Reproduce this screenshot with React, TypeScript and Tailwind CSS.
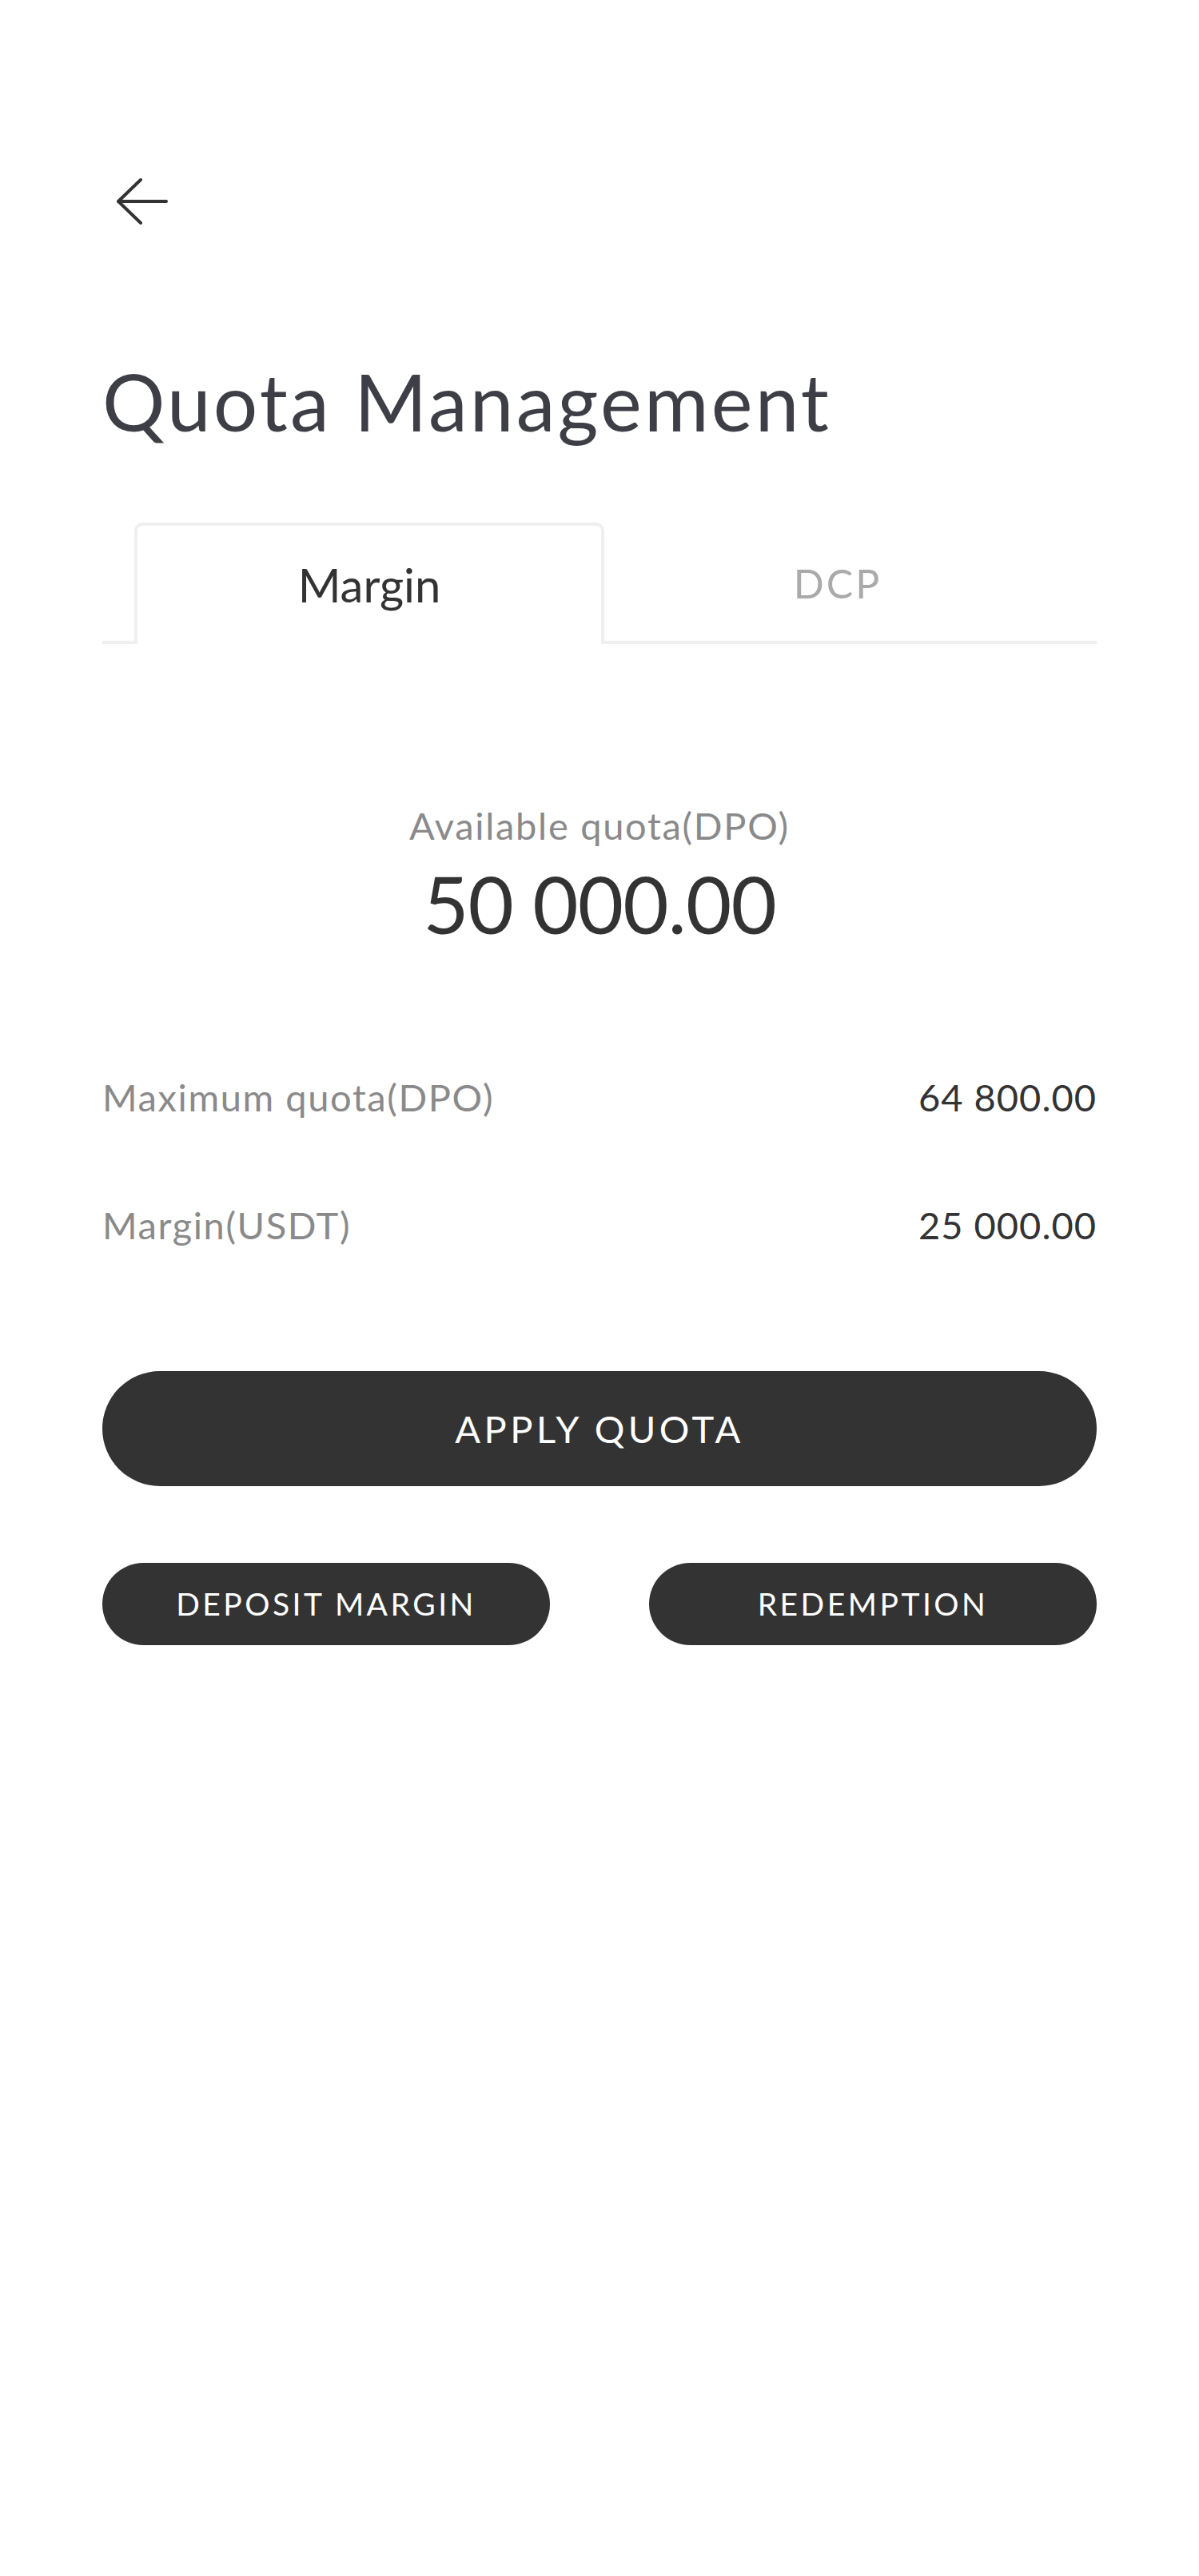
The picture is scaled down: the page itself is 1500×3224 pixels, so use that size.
import React from "react"

export default function App() {
  const rows = [
    { label: "Maximum quota(DPO)", value: "64 800.00" },
    { label: "Margin(USDT)", value: "25 000.00" },
  ]

  return (
    <div className="min-h-[3224px] w-full bg-white font-['Lato','Liberation_Sans',sans-serif] text-[#333333]">
      <div className="px-[128px] pt-[220px]">
        {/* back */}
        <button className="ml-[16px] block">
          <svg width="68" height="64" viewBox="0 0 68 64" fill="none" stroke="#333333" strokeWidth="4" strokeLinecap="round" strokeLinejoin="round">
            <path d="M32 5L4 32L32 59" />
            <path d="M5 32H64" />
          </svg>
        </button>

        <h1 className="mt-[169px] text-[98px] leading-none font-normal tracking-[3.2px] text-[#3e3e46] whitespace-nowrap">Quota Management</h1>

        {/* tabs */}
        <div className="mt-[103px] flex border-b-4 border-[#efefef] pl-[40px]">
          <div className="-mb-[4px] flex h-[152px] w-[588px] items-center justify-center rounded-t-[10px] border-4 border-b-0 border-[#efefef] bg-white">
            <span className="text-[58px] leading-none text-[#333333]">Margin</span>
          </div>
          <div className="-mb-[4px] flex h-[152px] w-[584px] items-center justify-center">
            <span className="text-[50px] leading-none tracking-[3px] text-[#aaaaaa]">DCP</span>
          </div>
        </div>

        {/* available */}
        <div className="mt-[204px] flex flex-col items-center">
          <div className="text-[47px] leading-none tracking-[1.7px] text-[#8a8a8a]">Available quota(DPO)</div>
          <div className="mt-[24px] text-[99px] leading-none tracking-[-1px] text-[#333333]">50 000.00</div>
        </div>

        <div className="mt-[170px] flex flex-col gap-[113px]">
          {rows.map((r) => (
            <div key={r.label} className="flex items-center justify-between text-[47px] leading-none">
              <span className="tracking-[1.6px] text-[#8a8a8a]">{r.label}</span>
              <span className="tracking-[1px] text-[#333333]">{r.value}</span>
            </div>
          ))}
        </div>

        <button className="mt-[159px] flex h-[144px] w-full items-center justify-center rounded-full bg-[#333333] text-[47px] leading-none tracking-[4.5px] text-white">
          APPLY QUOTA
        </button>

        <div className="mt-[96px] flex justify-between">
          <button className="flex h-[103px] w-[560px] items-center justify-center rounded-full bg-[#333333] text-[39px] leading-none tracking-[3.5px] text-white">
            DEPOSIT MARGIN
          </button>
          <button className="flex h-[103px] w-[560px] items-center justify-center rounded-full bg-[#333333] text-[39px] leading-none tracking-[3.5px] text-white">
            REDEMPTION
          </button>
        </div>
      </div>
    </div>
  )
}
